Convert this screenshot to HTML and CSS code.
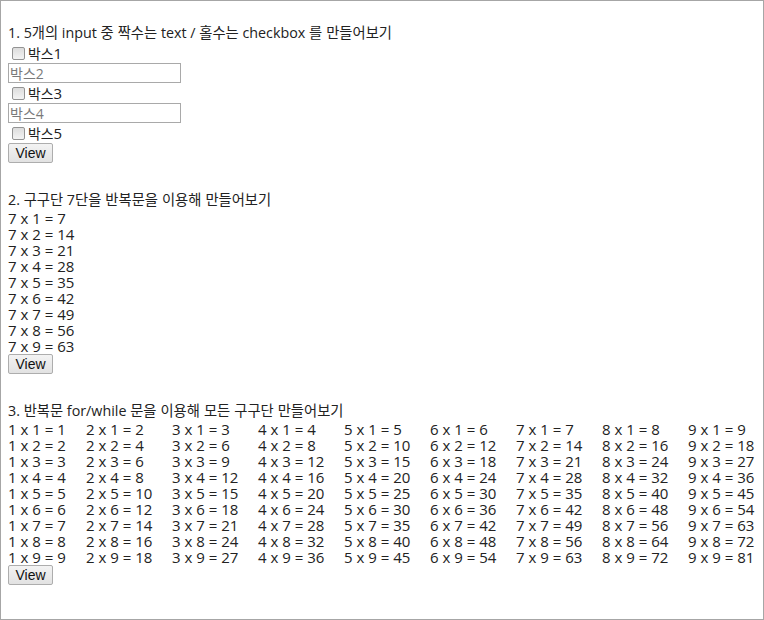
FILE: index.html
```html
<!DOCTYPE html>
<html lang="ko">
<head>
<meta charset="utf-8">
<title>반복문 연습</title>
<link rel="stylesheet" href="styles.css">
</head>
<body>
<div class="page">
  <section class="section">
    <div class="title">1. 5<span class="ko">개의</span> input <span class="ko">중 짝수는</span> text / <span class="ko">홀수는</span> checkbox <span class="ko">를 만들어보기</span></div>
    <label class="check-row"><input type="checkbox" class="check"><span><span class="ko">박스</span>1</span></label>
    <input type="text" class="text-input" placeholder="박스2">
    <label class="check-row"><input type="checkbox" class="check"><span><span class="ko">박스</span>3</span></label>
    <input type="text" class="text-input" placeholder="박스4">
    <label class="check-row"><input type="checkbox" class="check"><span><span class="ko">박스</span>5</span></label>
    <button class="btn" type="button">View</button>
  </section>

  <section class="section">
    <div class="title">2. <span class="ko">구구단</span> 7<span class="ko">단을 반복문을 이용해 만들어보기</span></div>
    <div class="list">
      <div class="line">7 x 1 = 7</div>
      <div class="line">7 x 2 = 14</div>
      <div class="line">7 x 3 = 21</div>
      <div class="line">7 x 4 = 28</div>
      <div class="line">7 x 5 = 35</div>
      <div class="line">7 x 6 = 42</div>
      <div class="line">7 x 7 = 49</div>
      <div class="line">7 x 8 = 56</div>
      <div class="line">7 x 9 = 63</div>
    </div>
    <button class="btn" type="button">View</button>
  </section>

  <section class="section">
    <div class="title">3. <span class="ko">반복문</span> for/while <span class="ko">문을 이용해 모든 구구단 만들어보기</span></div>
    <div class="table">
      <div class="col"><div class="line">1 x 1 = 1</div><div class="line">1 x 2 = 2</div><div class="line">1 x 3 = 3</div><div class="line">1 x 4 = 4</div><div class="line">1 x 5 = 5</div><div class="line">1 x 6 = 6</div><div class="line">1 x 7 = 7</div><div class="line">1 x 8 = 8</div><div class="line">1 x 9 = 9</div></div>
      <div class="col"><div class="line">2 x 1 = 2</div><div class="line">2 x 2 = 4</div><div class="line">2 x 3 = 6</div><div class="line">2 x 4 = 8</div><div class="line">2 x 5 = 10</div><div class="line">2 x 6 = 12</div><div class="line">2 x 7 = 14</div><div class="line">2 x 8 = 16</div><div class="line">2 x 9 = 18</div></div>
      <div class="col"><div class="line">3 x 1 = 3</div><div class="line">3 x 2 = 6</div><div class="line">3 x 3 = 9</div><div class="line">3 x 4 = 12</div><div class="line">3 x 5 = 15</div><div class="line">3 x 6 = 18</div><div class="line">3 x 7 = 21</div><div class="line">3 x 8 = 24</div><div class="line">3 x 9 = 27</div></div>
      <div class="col"><div class="line">4 x 1 = 4</div><div class="line">4 x 2 = 8</div><div class="line">4 x 3 = 12</div><div class="line">4 x 4 = 16</div><div class="line">4 x 5 = 20</div><div class="line">4 x 6 = 24</div><div class="line">4 x 7 = 28</div><div class="line">4 x 8 = 32</div><div class="line">4 x 9 = 36</div></div>
      <div class="col"><div class="line">5 x 1 = 5</div><div class="line">5 x 2 = 10</div><div class="line">5 x 3 = 15</div><div class="line">5 x 4 = 20</div><div class="line">5 x 5 = 25</div><div class="line">5 x 6 = 30</div><div class="line">5 x 7 = 35</div><div class="line">5 x 8 = 40</div><div class="line">5 x 9 = 45</div></div>
      <div class="col"><div class="line">6 x 1 = 6</div><div class="line">6 x 2 = 12</div><div class="line">6 x 3 = 18</div><div class="line">6 x 4 = 24</div><div class="line">6 x 5 = 30</div><div class="line">6 x 6 = 36</div><div class="line">6 x 7 = 42</div><div class="line">6 x 8 = 48</div><div class="line">6 x 9 = 54</div></div>
      <div class="col"><div class="line">7 x 1 = 7</div><div class="line">7 x 2 = 14</div><div class="line">7 x 3 = 21</div><div class="line">7 x 4 = 28</div><div class="line">7 x 5 = 35</div><div class="line">7 x 6 = 42</div><div class="line">7 x 7 = 49</div><div class="line">7 x 8 = 56</div><div class="line">7 x 9 = 63</div></div>
      <div class="col"><div class="line">8 x 1 = 8</div><div class="line">8 x 2 = 16</div><div class="line">8 x 3 = 24</div><div class="line">8 x 4 = 32</div><div class="line">8 x 5 = 40</div><div class="line">8 x 6 = 48</div><div class="line">8 x 7 = 56</div><div class="line">8 x 8 = 64</div><div class="line">8 x 9 = 72</div></div>
      <div class="col"><div class="line">9 x 1 = 9</div><div class="line">9 x 2 = 18</div><div class="line">9 x 3 = 27</div><div class="line">9 x 4 = 36</div><div class="line">9 x 5 = 45</div><div class="line">9 x 6 = 54</div><div class="line">9 x 7 = 63</div><div class="line">9 x 8 = 72</div><div class="line">9 x 9 = 81</div></div>
    </div>
    <button class="btn" type="button">View</button>
  </section>
</div>
</body>
</html>
```

FILE: styles.css
```css
html, body {
  margin: 0;
  padding: 0;
  background: #ffffff;
}

.page {
  box-sizing: border-box;
  width: 764px;
  height: 620px;
  border: 1px solid #a6a6a6;
  padding: 22px 7px 0 7px;
  font-family: "Open Sans", "Noto Sans CJK KR", sans-serif;
  font-size: 15px;
  color: #222222;
}

.ko {
  font-family: "Noto Sans CJK KR", sans-serif;
  font-size: 13.8px;
}

.section + .section {
  margin-top: 27px;
}

.title {
  height: 20px;
  line-height: 17px;
  font-size: 14.3px;
  white-space: nowrap;
}

.title .ko {
  font-size: 14.3px;
}

.check-row {
  display: flex;
  align-items: center;
  height: 20px;
  line-height: 20px;
}

.check {
  appearance: none;
  -webkit-appearance: none;
  box-sizing: border-box;
  flex: none;
  width: 13px;
  height: 13px;
  margin: 0 3px 0 4px;
  border: 1px solid #939393;
  border-radius: 2px;
  background: linear-gradient(#dcdcdc, #f3f3f3);
}

.text-input {
  display: block;
  box-sizing: border-box;
  width: 173px;
  height: 20px;
  margin: 0;
  padding: 0 1px;
  border: 1px solid #a9a9a9;
  font-family: "Open Sans", "Noto Sans CJK KR", sans-serif;
  font-size: 14px;
  color: #222222;
  outline: none;
}

.text-input::placeholder {
  color: #7a7a7a;
}

.line {
  line-height: 16px;
  height: 16px;
  white-space: nowrap;
}

.table {
  display: grid;
  grid-template-columns: 78px repeat(7, 86px) auto;
}

.btn {
  display: block;
  box-sizing: border-box;
  width: 45px;
  height: 20px;
  margin: 0;
  padding: 0;
  border: 1px solid #adadad;
  border-radius: 2px;
  background: linear-gradient(#f3f3f3, #e2e2e2);
  font-family: "Liberation Sans", Arial, sans-serif;
  font-size: 14px;
  color: #111111;
}
```
